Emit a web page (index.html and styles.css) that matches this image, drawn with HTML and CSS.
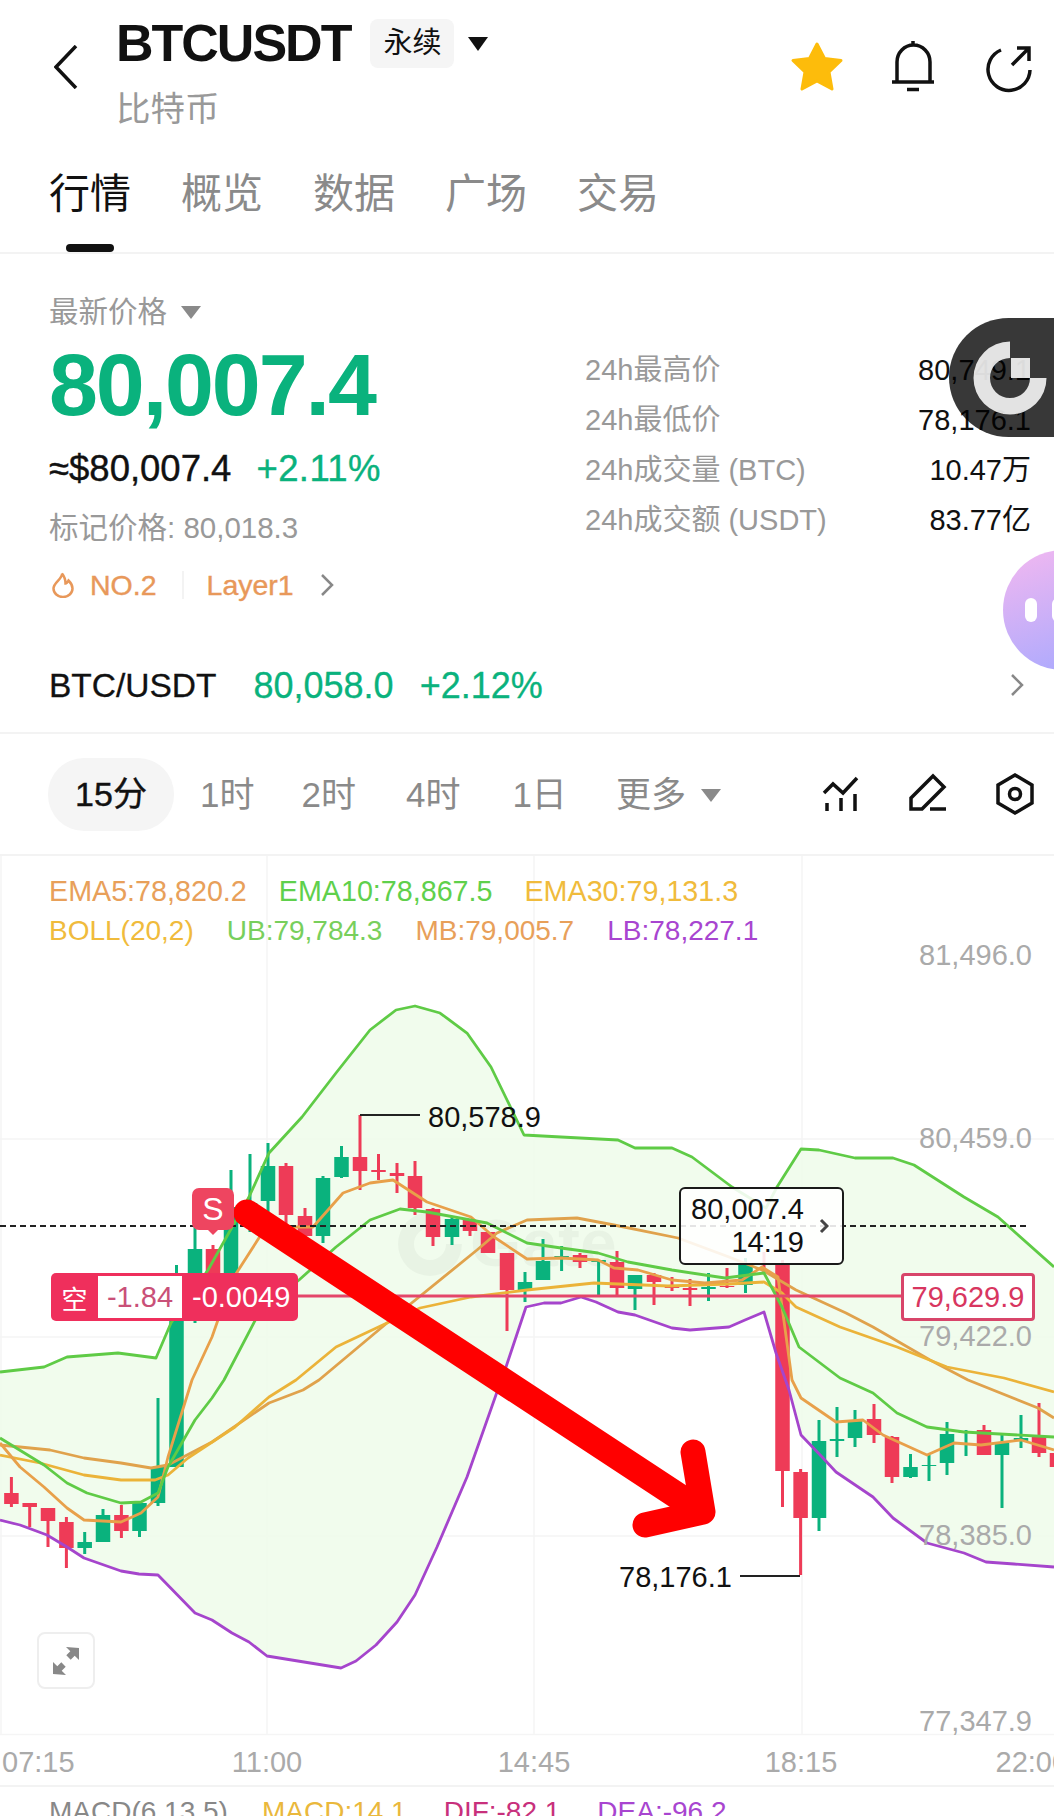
FILE: index.html
```html
<!DOCTYPE html>
<html lang="zh-CN">
<head>
  <meta charset="UTF-8">
  <meta name="viewport" content="width=device-width, initial-scale=1.0">
  <title>BTCUSDT 永续</title>
  <link rel="stylesheet" href="styles.css">
</head>
<body>
  <div class="page">

    <header class="top-bar">
      <svg class="back-icon" width="24" height="44" viewBox="0 0 24 44"><path d="M22 1 2 22l20 21"/></svg>
      <div class="symbol">
        <div class="symbol-row">
          <h1>BTCUSDT</h1>
          <span class="contract">永续</span>
          <span class="caret caret-black"></span>
        </div>
        <div class="symbol-name">比特币</div>
      </div>
      <svg class="top-icons" width="250" height="60" viewBox="790 38 250 60">
        <path class="star" d="M817 44l7.500 14.500 16.500 2-12 11.500 3 17-15-8-15 8 3-17-12-11.500 16.500-2z"/>
        <g class="line-icon">
          <path d="M897 82V62a16.500 17 0 0 1 33 0V82M892 82H934M913 41v4M907 89.500h12"/>
          <path d="M1001 50A21 21 0 1 0 1030 70M1012 65l16-16M1017 48h12v13"/>
        </g>
      </svg>
    </header>

    <nav class="tabs">
      <a class="tab active">行情</a>
      <a class="tab">概览</a>
      <a class="tab">数据</a>
      <a class="tab">广场</a>
      <a class="tab">交易</a>
    </nav>

    <section class="ticker">
      <div class="ticker-left">
        <div class="last-label">最新价格 <span class="caret caret-grey"></span></div>
        <div class="last-price">80,007.4</div>
        <div class="usd-row"><span>≈$80,007.4</span><span class="green">+2.11%</span></div>
        <div class="mark-price">标记价格: 80,018.3</div>
        <div class="tags">
          <svg width="22" height="26" viewBox="0 0 22 26"><path d="M10 1.500c1 5-8.500 9-8.500 15a9.500 8.500 0 0 0 19 0c0-4-2-6-4-8-1 2-2 3-3 3 0-3-1-7-3.500-10z"/></svg>
          <span class="tag-rank">NO.2</span>
          <span class="tag-sep"></span>
          <span class="tag-name">Layer1</span>
          <svg class="chevron" width="14" height="22" viewBox="0 0 14 22"><path d="M2 1l10 10L2 21"/></svg>
        </div>
      </div>
      <dl class="stats">
        <div class="stat"><dt>24h最高价</dt><dd>80,749.1</dd></div>
        <div class="stat"><dt>24h最低价</dt><dd>78,176.1</dd></div>
        <div class="stat"><dt>24h成交量 (BTC)</dt><dd>10.47万</dd></div>
        <div class="stat"><dt>24h成交额 (USDT)</dt><dd>83.77亿</dd></div>
      </dl>
    </section>

    <section class="spot-row">
      <span class="spot-name">BTC/USDT</span>
      <span class="green">80,058.0</span>
      <span class="green">+2.12%</span>
      <svg class="chevron spot-chevron" width="14" height="22" viewBox="0 0 14 22"><path d="M2 1l10 10L2 21"/></svg>
    </section>

    <section class="periods">
      <span class="period active">15分</span>
      <span class="period p-1h">1时</span>
      <span class="period p-2h">2时</span>
      <span class="period p-4h">4时</span>
      <span class="period p-1d">1日</span>
      <span class="period p-more">更多 <span class="caret caret-grey"></span></span>
      <svg class="tools" width="212" height="44" viewBox="822 774 212 44">
        <g class="line-icon">
          <path d="M824 794l9-9 10 9 14-15M827 804v8M841 799v13M855 795v17"/>
          <path d="M911 810V799L933 777l11 11-22 22zM930 810h16"/>
          <path d="M1015 776l17 10v18l-17 10-17-10V786z"/>
          <circle cx="1015" cy="795" r="5.500"/>
        </g>
      </svg>
    </section>

    <section class="chart">
      <svg class="chart-svg" width="1054" height="880" viewBox="0 856 1054 880">
        <path class="grid" d="M0 1139H1054M0 1337H1054M0 1536H1054M0 1734.500H1054M1 856V1735M267 856V1735M534 856V1735M802 856V1735"/>

        <path class="band" d="M0 1372 44 1367 67 1357 118 1353 156 1358 171 1323 208 1270 249 1197 269 1153 302 1117 336 1073 370 1030 396 1010 415 1006 440 1013 467 1033 491 1067 524 1135 561 1137 618 1140 635 1148 672 1148 692 1157 732 1187 766 1208 777 1187 801 1149 819 1150 855 1158 893 1158 914 1165 964 1197 998 1217 1054 1267V1567L1014 1564 986 1562 964 1553 927 1543 893 1518 873 1497 836 1472 823 1458 801 1435 789 1390 776 1353 764 1312 745 1320 729 1327 690 1330 672 1328 635 1315 618 1312 596 1302 581 1297 561 1303 544 1303 526 1307 506 1367 497 1392 467 1477 437 1547 415 1595 397 1622 376 1645 356 1661 341 1668 304 1662 267 1656 249 1642 232 1633 212 1620 195 1613 158 1575 139 1574 121 1571 84 1558 67 1547 47 1535 20 1525 0 1520z"/>

        <g class="watermark">
          <path d="M430 1212a32 32 0 1 0 32 32H446a16 16 0 1 1-16-16z"/>
          <text x="470" y="1266">Gate</text>
        </g>

        <path class="wick red-line" d="M11.400 1477V1507M29.700 1503V1527M48 1508V1547M66.400 1517V1568M121.400 1505V1538M213 1245V1280M286 1163V1227M305 1208V1237M360 1115V1190M378.500 1154V1180M397 1163V1193M415 1161V1215M433 1208V1246M470 1220V1236M488 1232V1253M507 1253V1331M580 1253V1268M617 1251V1295M654 1273V1305M672 1277V1291M690 1279V1306M727 1268V1288M764 1252V1273M782.500 1260V1507M800.600 1469V1575M874 1404V1443M892 1436V1483M984 1425V1455M1039 1403V1457"/>
        <path class="body red-line" d="M11.400 1493V1504M29.700 1503V1507M48 1508V1521M66.400 1522V1548M121.400 1515V1531M213 1249V1290M286 1166V1215M305 1216V1236M360 1157V1171M378.500 1170V1172M397 1173V1176M415 1176V1208M433 1209V1237M470 1220V1231M488 1232V1253M507 1253V1290M580 1255V1262M617 1262V1288M654 1275V1282M672 1287V1288M690 1288V1290M727 1286V1287M782.500 1265V1471M800.600 1472V1518M874 1419V1435M892 1437V1477M984 1430V1455M1039 1437V1453M1057 1453V1467"/>
        <path class="wick green-line" d="M84.700 1532V1554M103 1509V1542M139.500 1503V1537M158 1398V1506M176.500 1265V1467M195 1227V1323M231 1170V1300M250 1154V1232M268 1143V1215M323 1176V1243M341.500 1146V1178M452 1217V1245M525 1272V1302M543 1239V1280M561.600 1246V1271M598.600 1260V1295M635 1275V1310M708.500 1273V1301M745.500 1258V1293M819 1420V1531M837 1407V1457M855 1410V1447M910.500 1454V1478M929 1455V1481M947 1422V1475M966 1430V1456M1002 1433V1508M1021 1415V1448"/>
        <path class="body green-line" d="M84.700 1542V1548M103 1515V1542M139.500 1503V1531M158 1467V1503M176.500 1280V1467M195 1249V1310M231 1207V1300M250 1203V1205M268 1166V1201M323 1178V1236M341.500 1157V1177M452 1219V1237M525 1282V1290M543 1261V1280M561.600 1256V1258M598.600 1260V1262M635 1275V1289M708.500 1287V1289M745.500 1265V1285M819 1441V1518M837 1439V1441M855 1420V1438M910.500 1467V1477M929 1465V1466M947 1434V1463M966 1432V1433M1002 1443V1455M1021 1438V1441"/>

        <path class="ma ma-a" d="M0 1445 50 1450 84 1458 121 1463 151 1468 168 1465 212 1442 269 1403 303 1390 319 1380 387 1323 477 1250 497 1233 527 1220 577 1218 614 1225 678 1238 729 1257 762 1270 796 1290 846 1313 873 1327 930 1360 968 1380 1038 1408 1054 1418"/>
        <path class="ma ma-b" d="M0 1455 40 1463 84 1475 121 1480 155 1480 168 1475 188 1458 235 1427 269 1397 296 1380 336 1347 387 1323 420 1308 471 1297 527 1290 594 1283 668 1286 729 1284 764 1282 782 1293 796 1307 840 1327 897 1347 947 1367 1004 1378 1054 1392"/>
        <path class="ma ma-c" d="M0 1443 20 1467 44 1487 67 1508 84 1520 121 1522 141 1513 158 1497 168 1457 192 1380 212 1337 232 1280 266 1227 296 1227 313 1227 343 1193 370 1183 393 1180 427 1202 471 1217 494 1237 527 1259 561 1258 598 1260 614 1268 638 1270 672 1280 705 1283 742 1280 762 1267 778 1277 792 1380 801 1398 836 1422 863 1420 883 1435 927 1455 954 1443 981 1445 1021 1440 1054 1450"/>
        <path class="ma ma-d" d="M0 1438 44 1465 67 1483 87 1493 121 1503 141 1502 158 1493 168 1467 195 1420 212 1398 224 1380 259 1313 299 1280 336 1247 370 1220 400 1209 427 1212 487 1223 527 1243 561 1248 598 1253 628 1262 672 1270 725 1278 764 1273 782 1307 799 1347 840 1378 873 1393 897 1413 927 1427 964 1432 1054 1437"/>
        <path class="ma ma-ub" d="M0 1372 44 1367 67 1357 118 1353 156 1358 171 1323 208 1270 249 1197 269 1153 302 1117 336 1073 370 1030 396 1010 415 1006 440 1013 467 1033 491 1067 524 1135 561 1137 618 1140 635 1148 672 1148 692 1157 732 1187 766 1208 777 1187 801 1149 819 1150 855 1158 893 1158 914 1165 964 1197 998 1217 1054 1267"/>
        <path class="ma ma-lb" d="M0 1520 20 1525 47 1535 67 1547 84 1558 121 1571 139 1574 158 1575 195 1613 212 1620 232 1633 249 1642 267 1656 304 1662 341 1668 356 1661 376 1645 397 1622 415 1595 437 1547 467 1477 497 1392 506 1367 526 1307 544 1303 561 1303 581 1297 596 1302 618 1312 635 1315 672 1328 690 1330 729 1327 745 1320 764 1312 776 1353 789 1390 801 1435 823 1458 836 1472 873 1497 893 1518 927 1543 964 1553 986 1562 1014 1564 1054 1567"/>

        <path class="last-line" d="M0 1226H1028"/>
        <path class="position-line" d="M298 1296H902"/>
        <path class="leader" d="M360 1115H420M740 1576H800"/>

        <text class="axis" x="1032" y="965">81,496.0</text>
        <text class="axis" x="1032" y="1148">80,459.0</text>
        <text class="axis" x="1032" y="1346">79,422.0</text>
        <text class="axis" x="1032" y="1545">78,385.0</text>
        <text class="axis" x="1032" y="1731">77,347.9</text>
        <text class="extreme" x="428" y="1127">80,578.9</text>
        <text class="extreme" x="619" y="1587">78,176.1</text>

        <path class="arrow arrow-shaft" d="M247 1213 690 1504"/>
        <path class="arrow arrow-head" d="M693 1452 703 1512 645 1525"/>
      </svg>

      <div class="legend">
        <div class="legend-row legend-ema">
          <span class="c-orange">EMA5:78,820.2</span>
          <span class="c-green">EMA10:78,867.5</span>
          <span class="c-yellow">EMA30:79,131.3</span>
        </div>
        <div class="legend-row">
          <span class="c-yellow">BOLL(20,2)</span>
          <span class="c-lime">UB:79,784.3</span>
          <span class="c-orange">MB:79,005.7</span>
          <span class="c-purple">LB:78,227.1</span>
        </div>
      </div>

      <div class="sell-badge">S</div>

      <div class="position">
        <span class="pos-side">空</span>
        <span class="pos-pnl">-1.84</span>
        <span class="pos-rate">-0.0049</span>
      </div>

      <div class="last-tip">
        <div class="last-tip-text"><div>80,007.4</div><div>14:19</div></div>
        <svg width="10" height="16" viewBox="0 0 10 16"><path d="M2 2l6 6-6 6"/></svg>
      </div>

      <div class="avg-price">79,629.9</div>

      <button class="expand">
        <svg width="28" height="28" viewBox="0 0 28 28"><path d="M27 1v12l-4.300-4.300-4 4-4.400-4.400 4-4L14 0zM1 27V15l4.300 4.300 4-4 4.400 4.400-4 4L14 28z"/></svg>
      </button>
    </section>

    <div class="time-axis">
      <span>07:15</span><span>11:00</span><span>14:45</span><span>18:15</span><span>22:00</span>
    </div>

    <div class="macd">
      <span class="macd-name">MACD(6,13,5)</span>
      <span class="macd-val">MACD:14.1</span>
      <span class="macd-dif">DIF:-82.1</span>
      <span class="macd-dea">DEA:-96.2</span>
    </div>

    <div class="float-gate">
      <svg width="105" height="119" viewBox="949 318 105 119">
        <path d="M1010 341.500A36.500 36.500 0 1 0 1046.500 378H1030A20 20 0 1 1 1010 358z"/>
        <rect x="1011" y="358" width="19" height="20"/>
      </svg>
    </div>

    <div class="float-bot"><span></span><span></span></div>
  </div>
</body>
</html>
```

FILE: styles.css
```css
* {
  box-sizing: border-box;
}

body {
  margin: 0;
  background: #fff;
  color: #111;
  font-family: "Liberation Sans", "Noto Sans CJK SC", sans-serif;
}

.page {
  position: relative;
  width: 1054px;
  height: 1816px;
  overflow: hidden;
}

.green {
  color: #0ab27d;
}

.caret {
  display: inline-block;
  width: 0;
  height: 0;
  border-style: solid;
  border-width: 14px 10px 0;
  border-color: #111 transparent transparent;
  vertical-align: middle;
}

.caret-grey {
  width: 0;
  border-width: 13px 10px 0;
  border-top-color: #8a8a8a;
}

.chevron path {
  fill: none;
  stroke: #888;
  stroke-width: 2.5;
}

.line-icon {
  fill: none;
  stroke: #111;
  stroke-width: 3.5;
}

/* top bar */
.top-bar {
  position: relative;
  height: 142px;
  padding: 19px 0 0 116px;
}

.back-icon {
  position: absolute;
  top: 45px;
  left: 54px;
}

.back-icon path {
  fill: none;
  stroke: #111;
  stroke-width: 3.5;
}

.symbol-row {
  display: flex;
  align-items: center;
  height: 49px;
}

h1 {
  margin: 0;
  font-size: 52px;
  font-weight: 700;
  letter-spacing: -2px;
  line-height: 49px;
}

.contract {
  margin-left: 20px;
  width: 84px;
  height: 49px;
  border-radius: 8px;
  background: #f5f5f5;
  font-size: 29px;
  line-height: 49px;
  text-align: center;
}

.symbol-row .caret {
  margin: 0 0 0 14px;
}

.symbol-name {
  margin-top: 23px;
  color: #999;
  font-size: 34.500px;
  line-height: 36px;
}

.top-icons {
  position: absolute;
  top: 38px;
  left: 790px;
}

.star {
  fill: #fdbc0b;
  stroke: #fdbc0b;
  stroke-width: 3;
  stroke-linejoin: round;
}

/* tabs */
.tabs {
  display: flex;
  gap: 50px;
  height: 112px;
  padding: 28px 0 0 49px;
  border-bottom: 2px solid #f3f3f3;
}

.tab {
  position: relative;
  color: #8a8a8a;
  font-size: 41px;
  line-height: 48px;
}

.tab.active {
  color: #111;
}

.tab.active::after {
  content: "";
  position: absolute;
  left: 17px;
  bottom: 0;
  width: 48px;
  height: 8px;
  border-radius: 4px;
  background: #111;
}

/* ticker */
.ticker {
  display: flex;
  height: 375px;
  padding: 0 23px 0 49px;
  justify-content: space-between;
}

.last-label {
  margin-top: 40px;
  color: #999;
  font-size: 29.500px;
  line-height: 36px;
}

.last-label .caret {
  margin: -4px 0 0 6px;
}

.last-price {
  margin-top: 15px;
  color: #0ab27d;
  font-size: 88px;
  font-weight: 700;
  letter-spacing: -2.100px;
  line-height: 80px;
}

.usd-row {
  display: flex;
  gap: 25px;
  margin-top: 24px;
  font-size: 36.500px;
  line-height: 40px;
  -webkit-text-stroke: .4px currentColor;
}

.usd-row .green {
  letter-spacing: .4px;
}

.mark-price {
  margin-top: 21px;
  color: #999;
  font-size: 29.500px;
  line-height: 36px;
}

.tags {
  display: flex;
  align-items: center;
  margin-top: 21px;
  height: 36px;
  color: #e8985a;
  font-size: 28.500px;
  -webkit-text-stroke: .4px currentColor;
}

.tags > svg:first-child {
  margin-left: 3px;
}

.tags > svg:first-child path {
  fill: none;
  stroke: #e8985a;
  stroke-width: 2.500;
}

.tag-rank {
  margin-left: 16px;
}

.tag-sep {
  width: 2px;
  height: 28px;
  margin: 0 23px 0 25px;
  background: #f3f3f3;
}

.tags .chevron {
  margin-left: 26px;
}

.stats {
  width: 446px;
  margin: 92px 0 0;
}

.stat {
  display: flex;
  justify-content: space-between;
  height: 50px;
  font-size: 29px;
  line-height: 48px;
}

.stat dt {
  color: #999;
}

.stat dd {
  margin: 0;
}

/* spot row */
.spot-row {
  display: flex;
  align-items: center;
  gap: 37px;
  height: 105px;
  padding: 11px 0 0 49px;
  border-bottom: 2px solid #f3f3f3;
  font-size: 36px;
  position: relative;
  -webkit-text-stroke: .3px currentColor;
}

.spot-name {
  font-size: 33.500px;
}

.spot-row span + span + span {
  margin-left: -11px;
}

.spot-chevron {
  position: absolute;
  right: 30px;
  top: 45px;
}

/* period bar */
.periods {
  position: relative;
  height: 122px;
  padding: 2px 0 0 48px;
  color: #8a8a8a;
  font-size: 35px;
  border-bottom: 2px solid #f3f3f3;
  display: flex;
  align-items: center;
}

.period {
  line-height: 40px;
  white-space: nowrap;
}

.period.active {
  display: block;
  width: 126px;
  height: 73px;
  margin-top: -2px;
  border-radius: 36px;
  background: #f5f5f5;
  color: #111;
  font-size: 34px;
  line-height: 73px;
  text-align: center;
  -webkit-text-stroke: .4px currentColor;
}

.p-1h { margin-left: 26px; }
.p-2h { margin-left: 47px; }
.p-4h { margin-left: 50px; }
.p-1d { margin-left: 52px; }
.p-more { margin-left: 49px; }

.p-more .caret {
  margin: -4px 0 0 5px;
}

.tools {
  position: absolute;
  left: 822px;
  top: 39px;
}

/* chart */
.chart {
  position: relative;
  height: 879px;
}

.chart-svg {
  position: absolute;
  top: 0;
  left: 0;
}

.grid {
  fill: none;
  stroke: #f5f5f5;
  stroke-width: 1.500;
}

.band {
  fill: #eefbea;
  fill-opacity: .85;
}

.watermark {
  fill: #000;
  fill-opacity: .035;
  font-size: 66px;
  font-weight: 700;
}

.wick,
.body,
.ma,
.last-line,
.position-line,
.leader,
.arrow {
  fill: none;
}

.wick {
  stroke-width: 3;
}

.body {
  stroke-width: 14.500;
}

.red-line {
  stroke: #ee3b57;
}

.green-line {
  stroke: #0ab27d;
}

.ma {
  stroke-width: 2.800;
  stroke-linejoin: round;
}

.ma-a { stroke: #e0a24c; }
.ma-b { stroke: #ebb339; }
.ma-c { stroke: #e8a04a; }
.ma-d { stroke: #5fcb46; }
.ma-ub { stroke: #5fcb46; }
.ma-lb { stroke: #a545cc; }

.last-line {
  stroke: #222;
  stroke-width: 2;
  stroke-dasharray: 6 4;
}

.position-line {
  stroke: #e4466a;
  stroke-width: 3;
}

.leader {
  stroke: #222;
  stroke-width: 2;
}

.axis {
  fill: #aaa;
  font-size: 29px;
  text-anchor: end;
}

.extreme {
  fill: #111;
  font-size: 29px;
}

.arrow {
  stroke: #f00;
  stroke-linecap: round;
  stroke-linejoin: round;
}

.arrow-shaft {
  stroke-width: 27;
}

.arrow-head {
  stroke-width: 25;
}

.legend {
  position: absolute;
  top: 16px;
  left: 49px;
  font-size: 28px;
}

.legend-row {
  display: flex;
  gap: 33px;
  height: 39px;
  line-height: 39px;
}

.legend-ema {
  gap: 32px;
  font-size: 28.700px;
}

.c-orange { color: #e8a05a; }
.c-green { color: #5fd04c; }
.c-yellow { color: #f0bb3c; }
.c-lime { color: #78cf5c; }
.c-purple { color: #a845d0; }

.sell-badge {
  position: absolute;
  top: 332px;
  left: 192px;
  width: 42px;
  height: 42px;
  border-radius: 7px;
  background: #ee4560;
  color: #fff;
  font-size: 32px;
  line-height: 42px;
  text-align: center;
}

.sell-badge::after {
  content: "";
  position: absolute;
  left: 16px;
  bottom: -5px;
  border-style: solid;
  border-width: 5px 5px 0;
  border-color: #ee4560 transparent transparent;
}

.position {
  position: absolute;
  top: 417px;
  left: 51px;
  display: flex;
  align-items: center;
  width: 247px;
  height: 48px;
  border-radius: 5px;
  background: #ef2f5c;
  color: #fff;
  font-size: 29px;
}

.pos-side {
  width: 47px;
  font-size: 26px;
  text-align: center;
}

.pos-pnl {
  width: 84px;
  height: 42px;
  background: #fff;
  color: #c95078;
  line-height: 42px;
  text-align: center;
}

.pos-rate {
  margin-left: 10px;
}

.last-tip {
  position: absolute;
  top: 331px;
  left: 679px;
  display: flex;
  align-items: center;
  width: 165px;
  height: 78px;
  padding-left: 9px;
  border: 2px solid #1a1a1a;
  border-radius: 6px;
  background: rgba(255, 255, 255, .88);
  font-size: 29px;
  line-height: 33px;
}

.last-tip-text {
  width: 114px;
  text-align: right;
}

.last-tip svg {
  margin-left: 15px;
}

.last-tip path {
  fill: none;
  stroke: #444;
  stroke-width: 3;
}

.avg-price {
  position: absolute;
  top: 417px;
  left: 901px;
  width: 134px;
  height: 48px;
  border: 3px solid #d8456a;
  border-radius: 4px;
  background: #fff;
  color: #d8365f;
  font-size: 29px;
  line-height: 43px;
  text-align: center;
}

.expand {
  position: absolute;
  top: 776px;
  left: 37px;
  display: flex;
  align-items: center;
  justify-content: center;
  width: 58px;
  height: 57px;
  padding: 0;
  border: 2px solid #eee;
  border-radius: 8px;
  background: #fff;
}

.expand path {
  fill: #888;
}

/* time axis */
.time-axis {
  display: grid;
  grid-template-columns: 133.500px repeat(3, 267px) 200px;
  height: 52px;
  border-bottom: 2px solid #f3f3f3;
  color: #aaa;
  font-size: 29px;
  line-height: 54px;
  text-align: center;
}

.time-axis span:first-child {
  text-align: left;
  padding-left: 2px;
}

.time-axis span:last-child {
  text-align: left;
  padding-left: 61px;
}

/* macd row */
.macd {
  display: flex;
  height: 40px;
  padding: 9px 0 0 49px;
  font-size: 28px;
  line-height: 32px;
  white-space: nowrap;
}

.macd-name { color: #888; }
.macd-val { margin-left: 34px; color: #eab83c; }
.macd-dif { margin-left: 37px; color: #c8307c; }
.macd-dea { margin-left: 37px; color: #a845d0; }

/* floating widgets */
.float-gate {
  position: absolute;
  top: 318px;
  left: 949px;
  width: 105px;
  height: 119px;
  border-radius: 60px 0 0 60px;
  background: rgba(0, 0, 0, .78);
}

.float-gate svg {
  display: block;
  fill: #fff;
  fill-opacity: .86;
}

.float-bot {
  position: absolute;
  top: 550px;
  left: 1003px;
  display: flex;
  gap: 15px;
  align-items: center;
  width: 120px;
  height: 120px;
  padding-left: 22px;
  border-radius: 50%;
  background: linear-gradient(160deg, #f3b8f0, #a4a8ff);
}

.float-bot span {
  width: 12px;
  height: 24px;
  border-radius: 6px;
  background: #fff;
}
```
